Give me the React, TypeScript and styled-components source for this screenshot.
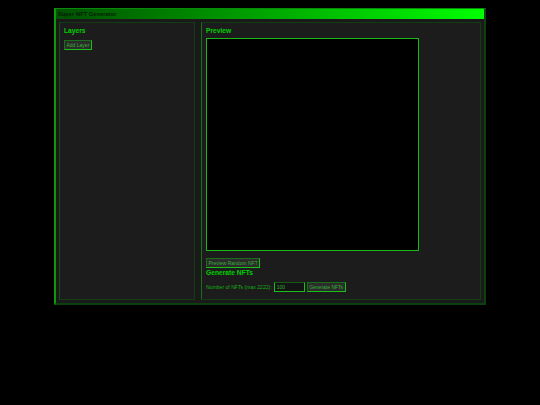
import styled, { createGlobalStyle } from 'styled-components';

const GlobalStyle = createGlobalStyle`
  html, body {
    margin: 0;
    background: #000;
    font-family: "Liberation Sans", Arial, sans-serif;
  }
`;

const Page = styled.div`
  width: 540px;
  height: 405px;
  padding: 8px 54px 0;
  box-sizing: border-box;
`;

const Window = styled.div`
  width: 432px;
  height: 297px;
  box-sizing: border-box;
  background: #1a1a1a;
  border-style: solid;
  border-width: 1px 2px 2px 2px;
  border-color: #0a8a0a #0c400c #0c400c #0a9a0a;
  display: flex;
  flex-direction: column;
`;

const TitleBar = styled.div`
  height: 10px;
  flex: none;
  padding-left: 2px;
  background: linear-gradient(to right, #005000, #00ff00);
  color: #001c00;
  font-size: 5.6px;
  font-weight: bold;
  line-height: 10px;
  letter-spacing: 0.1px;
`;

const Body = styled.div`
  flex: 1;
  min-height: 0;
  display: flex;
  gap: 6px;
  padding: 3px 3px 3px 3px;
`;

const Panel = styled.section<{ $width?: number; $accent?: boolean }>`
  box-sizing: border-box;
  background: #1c1c1c;
  border: 1px solid #123c12;
  border-left-color: ${({ $accent }) => ($accent ? '#187018' : '#144a14')};
  padding: 3px 4px;
  ${({ $width }) => ($width ? `width: ${$width}px; flex: none;` : 'flex: 1;')}
`;

const Heading = styled.h2`
  margin: 0;
  color: #00d000;
  font-size: 6.7px;
  font-weight: bold;
  line-height: 9px;
`;

const Button = styled.button`
  display: block;
  box-sizing: border-box;
  height: 10px;
  padding: 0 1.5px;
  background: #2c2c2c;
  border: 1px solid #1a6e1a;
  border-right-color: #18c018;
  border-bottom-color: #18c018;
  color: #34b034;
  font-family: inherit;
  font-size: 5px;
  line-height: 8px;
`;

const AddButton = styled(Button)`
  margin-top: 5px;
`;

const Canvas = styled.div`
  width: 213px;
  height: 213px;
  margin-top: 3px;
  box-sizing: border-box;
  background: #000;
  border: 1px solid #16b816;
`;

const PreviewButton = styled(Button)`
  margin-top: 7px;
`;

const GenerateRow = styled.div`
  display: flex;
  align-items: center;
  gap: 2px;
  margin-top: 5px;
`;

const FieldLabel = styled.label`
  color: #12b012;
  font-size: 5.1px;
`;

const CountInput = styled.input`
  box-sizing: border-box;
  width: 31px;
  height: 10px;
  padding: 0 2px;
  background: #141414;
  border: 1px solid #18c018;
  border-top-color: #145a14;
  color: #34b034;
  font-family: inherit;
  font-size: 5px;
  outline: none;
`;

export default function App() {
  return (
    <Page>
      <GlobalStyle />
      <Window>
        <TitleBar>Super NFT Generator</TitleBar>
        <Body>
          <Panel $width={136}>
            <Heading>Layers</Heading>
            <AddButton>Add Layer</AddButton>
          </Panel>
          <Panel $accent>
            <Heading>Preview</Heading>
            <Canvas />
            <PreviewButton>Preview Random NFT</PreviewButton>
            <Heading>Generate NFTs</Heading>
            <GenerateRow>
              <FieldLabel htmlFor="count">Number of NFTs (max 2222):</FieldLabel>
              <CountInput id="count" defaultValue="100" />
              <Button>Generate NFTs</Button>
            </GenerateRow>
          </Panel>
        </Body>
      </Window>
    </Page>
  );
}
